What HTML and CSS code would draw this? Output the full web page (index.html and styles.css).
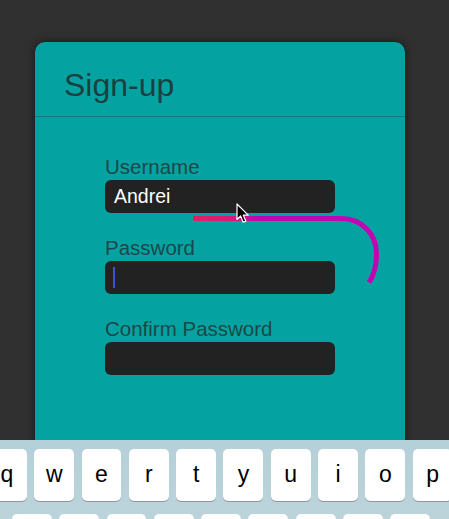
FILE: index.html
```html
<!DOCTYPE html>
<html lang="en">
<head>
<meta charset="utf-8">
<title>Sign-up</title>
<link rel="stylesheet" href="styles.css">
</head>
<body>
<div class="screen">
  <div class="card">
    <div class="card-header"><h1 class="title">Sign-up</h1></div>
    <div class="card-body">
      <div class="field">
        <div class="label">Username</div>
        <div class="input">Andrei</div>
      </div>
      <div class="field">
        <div class="label">Password</div>
        <div class="input"><span class="caret"></span></div>
      </div>
      <div class="field">
        <div class="label">Confirm Password</div>
        <div class="input"></div>
      </div>
    </div>
  </div>

  <svg class="gesture" width="449" height="519" viewBox="0 0 449 519">
    <defs>
      <linearGradient id="g" gradientUnits="userSpaceOnUse" x1="193" y1="0" x2="260" y2="0">
        <stop offset="0" stop-color="#e3205f"/>
        <stop offset="0.55" stop-color="#dc1a78"/>
        <stop offset="1" stop-color="#c205b2"/>
      </linearGradient>
    </defs>
    <path d="M193 218.5 H341 C362 218.5 376.5 234 376.5 254 C376.5 266 374 275 369 282.5" fill="none" stroke="url(#g)" stroke-width="5"/>
  </svg>

  <svg class="cursor" width="16" height="22" viewBox="0 0 16 22">
    <path d="M1 1 L1 16.5 L4.6 13 L7.2 19.2 L9.8 18.1 L7.3 12.2 L12.2 12.2 Z" fill="#000" stroke="#fff" stroke-width="1.2" stroke-linejoin="round"/>
  </svg>

  <div class="keyboard">
    <div class="row row-1">
      <div class="key">q</div><div class="key">w</div><div class="key">e</div><div class="key">r</div><div class="key">t</div><div class="key">y</div><div class="key">u</div><div class="key">i</div><div class="key">o</div><div class="key">p</div>
    </div>
    <div class="row row-2">
      <div class="key"></div><div class="key"></div><div class="key"></div><div class="key"></div><div class="key"></div><div class="key"></div><div class="key"></div><div class="key"></div><div class="key"></div>
    </div>
  </div>
</div>
</body>
</html>
```

FILE: styles.css
```css
* { box-sizing: border-box; }

html, body {
  margin: 0;
  padding: 0;
  background: #303030;
  font-family: "Liberation Sans", Arial, sans-serif;
}

.screen {
  position: relative;
  width: 449px;
  height: 519px;
  overflow: hidden;
  padding-top: 42px;
  padding-left: 35px;
}

.card {
  width: 370px;
  height: 480px;
  background: #04a3a2;
  border-radius: 10px 10px 0 0;
  box-shadow: 0 0 8px rgba(0, 0, 0, 0.55);
}

.card-header {
  height: 75px;
  border-bottom: 1px solid #0b7b7c;
  padding-left: 29px;
  display: flex;
  align-items: center;
}

.title {
  margin: 0;
  padding-top: 11px;
  font-weight: normal;
  font-size: 32px;
  line-height: 36px;
  color: #1c3f40;
}

.card-body {
  padding-top: 38px;
  padding-left: 70px;
  display: flex;
  flex-direction: column;
  gap: 23px;
}

.label {
  font-size: 20.5px;
  line-height: 23px;
  color: #1c4849;
  margin-bottom: 2px;
}

.input {
  width: 230px;
  height: 33px;
  border-radius: 6px;
  background: #222222;
  color: #ffffff;
  font-size: 19.5px;
  line-height: 33px;
  padding-left: 9px;
  display: flex;
  align-items: center;
}

.caret {
  display: block;
  width: 2px;
  height: 21px;
  margin-left: -1px;
  background: #3f4fd2;
}

.gesture {
  position: absolute;
  left: 0;
  top: 0;
  pointer-events: none;
}

.cursor {
  position: absolute;
  left: 236px;
  top: 203px;
}

.keyboard {
  position: absolute;
  left: 0;
  top: 440px;
  width: 449px;
  height: 79px;
  background: linear-gradient(#b4d0d8, #bcd3da);
  padding-top: 9px;
  display: flex;
  flex-direction: column;
  gap: 13px;
}

.row {
  display: flex;
  gap: 7.5px;
}

.row-1 { margin-left: -13px; }
.row-2 { margin-left: 12px; }

.key {
  flex: 0 0 39.8px;
  height: 52px;
  background: #ffffff;
  border-radius: 5px;
  box-shadow: 0 1px 0 #8b979c;
  text-align: center;
  font-size: 23px;
  line-height: 51px;
  color: #000;
}
```
